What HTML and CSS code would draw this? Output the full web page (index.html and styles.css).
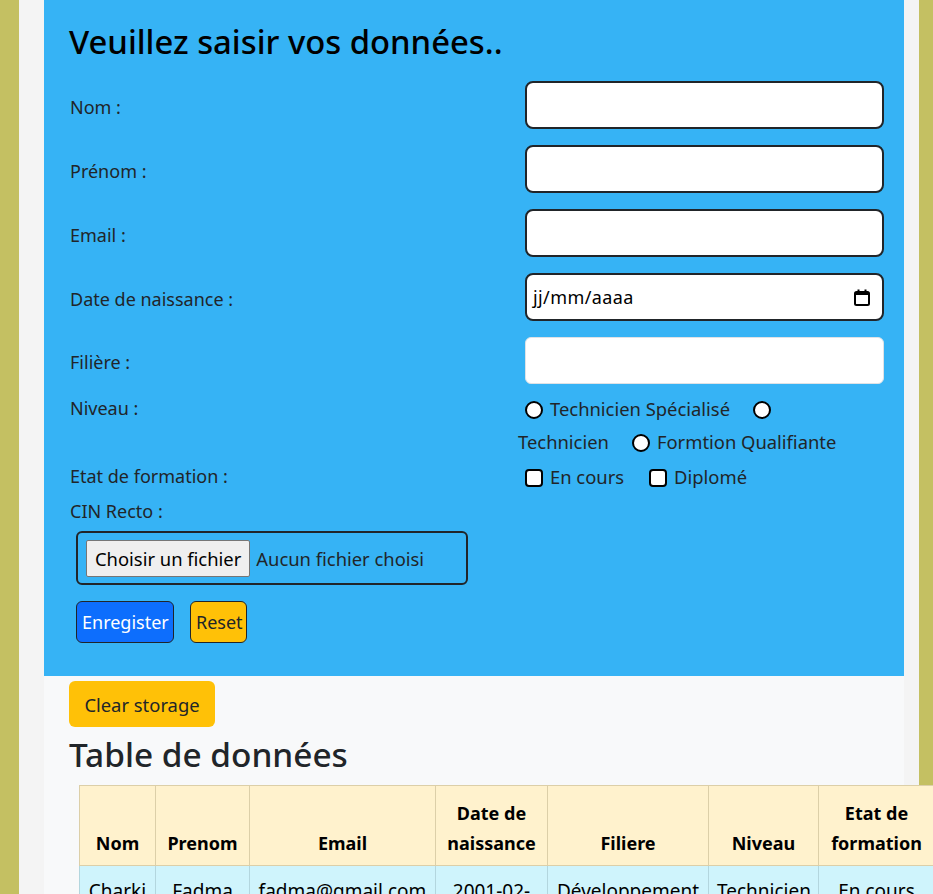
FILE: index.html
```html
<!DOCTYPE html>
<html lang="fr">
<head>
<meta charset="utf-8">
<title>Formulaire</title>
<link rel="stylesheet" href="styles.css">
</head>
<body>
<div class="page">
  <section class="panel">
    <h2 class="title">Veuillez saisir vos données..</h2>
    <form class="form">
      <div class="row">
        <label class="lbl">Nom :</label>
        <div class="field"><div class="input"></div></div>
      </div>
      <div class="row">
        <label class="lbl">Prénom :</label>
        <div class="field"><div class="input"></div></div>
      </div>
      <div class="row">
        <label class="lbl">Email :</label>
        <div class="field"><div class="input"></div></div>
      </div>
      <div class="row">
        <label class="lbl">Date de naissance :</label>
        <div class="field">
          <div class="input date">
            <span class="date-text">jj/mm/aaaa</span>
            <svg class="cal" width="16" height="17" viewBox="0 0 16 17"><rect x="1" y="3" width="14" height="13" rx="1.5" fill="none" stroke="#000" stroke-width="2"/><rect x="1" y="3" width="14" height="3" fill="#000"/><rect x="3.5" y="0.5" width="2" height="3" fill="#000"/><rect x="10.5" y="0.5" width="2" height="3" fill="#000"/></svg>
          </div>
        </div>
      </div>
      <div class="row">
        <label class="lbl">Filière :</label>
        <div class="field"><div class="input light"></div></div>
      </div>
      <div class="row choice niveau">
        <label class="lbl">Niveau :</label>
        <div class="opts">
          <span class="radio first"></span><span class="opt-text">Technicien Spécialisé</span><span class="radio"></span><br><span class="opt-text">Technicien</span><span class="radio"></span><span class="opt-text">Formtion Qualifiante</span>
        </div>
      </div>
      <div class="row choice etat">
        <label class="lbl">Etat de formation :</label>
        <div class="opts">
          <span class="check first"></span><span class="opt-text">En cours</span><span class="check"></span><span class="opt-text">Diplomé</span>
        </div>
      </div>
      <div class="cin">
        <label class="lbl">CIN Recto :</label>
      </div>
      <div class="filebox">
        <span class="filebtn">Choisir un fichier</span>
        <span class="filename">Aucun fichier choisi</span>
      </div>
      <div class="actions">
        <button type="button" class="btn btn-save">Enregister</button>
        <button type="button" class="btn btn-reset">Reset</button>
      </div>
    </form>
  </section>
  <section class="data">
    <button type="button" class="btn-clear">Clear storage</button>
    <h1 class="table-title">Table de données</h1>
    <table class="tbl">
      <colgroup>
        <col style="width:76px"><col style="width:94px"><col style="width:186px"><col style="width:112px"><col style="width:161px"><col style="width:110px"><col style="width:116px"><col style="width:110px"><col style="width:110px">
      </colgroup>
      <thead>
        <tr>
          <th>Nom</th><th>Prenom</th><th>Email</th><th>Date de naissance</th><th>Filiere</th><th>Niveau</th><th>Etat de formation</th><th>CIN Recto</th><th>Actions</th>
        </tr>
      </thead>
      <tbody>
        <tr>
          <td>Charki</td><td>Fadma</td><td>fadma@gmail.com</td><td>2001-02-14</td><td>Développement Digital</td><td>Technicien</td><td>En cours</td><td>cin.jpg</td><td>Supprimer</td>
        </tr>
      </tbody>
    </table>
  </section>
</div>
</body>
</html>
```
FILE: styles.css
```css
html, body {
  margin: 0;
  padding: 0;
}
body {
  background: #c4c062;
  font-family: "Noto Sans", "Open Sans", sans-serif;
  color: #212529;
  overflow: hidden;
  height: 894px;
}
.page {
  width: 860px;
  margin-left: 19px;
  background: #f4f4f4;
  padding: 0 15px 0 25px;
  min-height: 894px;
}
.panel {
  background: #36b3f5;
  padding: 23px 21px 33px 25px;
}
.title {
  margin: 0 0 20px 0;
  font-size: 32.8px;
  line-height: 38px;
  font-weight: 500;
  color: #000;
}
.form {
  display: flex;
  flex-direction: column;
}
.row {
  display: grid;
  grid-template-columns: 449px 366px;
  align-items: center;
  margin-bottom: 16px;
}
.row > .lbl {
  padding-top: 3px;
}
.lbl {
  font-size: 18px;
  color: #212529;
  padding-left: 1px;
}
.field {
  padding-left: 7px;
}
.input {
  box-sizing: border-box;
  height: 48px;
  background: #fff;
  border: 2px solid #212529;
  border-radius: 8px;
}
.input.light {
  border: 1px solid #dee2e6;
  height: 47px;
  border-radius: 6px;
}
.date {
  display: flex;
  align-items: center;
  justify-content: space-between;
  padding: 0 12px 0 6px;
}
.date-text {
  font-size: 18px;
  color: #000;
  letter-spacing: 0.4px;
}
.cal {
  display: block;
}
.choice {
  align-items: start;
  margin-bottom: 0;
}
.niveau {
  margin-top: -8px;
}
.etat {
  margin-top: 2px;
}
.row.choice > .lbl {
  line-height: 33px;
  padding-top: 0;
}
.opts {
  font-size: 18.4px;
  line-height: 33px;
  color: #212529;
}
.radio, .check {
  display: inline-block;
  box-sizing: border-box;
  width: 18px;
  height: 18px;
  background: #fff;
  border: 2px solid #000;
  vertical-align: -3px;
  margin: 0 7px 0 23px;
}
.radio {
  border-radius: 50%;
}
.check {
  border-radius: 4px;
  margin-left: 25px;
}
.radio.first, .check.first {
  margin-left: 7px;
}
.opt-text + .radio {
  margin-left: 23px;
}
.niveau .opts br + .opt-text + .radio {
  margin-left: 23px;
}
.cin {
  height: 33px;
  line-height: 33px;
  margin-top: 2px;
}
.cin .lbl {
  line-height: 33px;
}
.filebox {
  box-sizing: border-box;
  width: 392px;
  height: 54px;
  margin: 3px 0 0 7px;
  border: 2px solid #212529;
  border-radius: 6px;
  display: flex;
  align-items: center;
  padding-left: 8px;
}
.filebtn {
  box-sizing: border-box;
  height: 37px;
  padding: 0 8px;
  display: flex;
  align-items: center;
  background: #efefef;
  border: 1px solid #767676;
  border-radius: 2px;
  font-size: 18.4px;
  color: #000;
}
.filename {
  margin-left: 6px;
  font-size: 18.4px;
  color: #212529;
}
.actions {
  display: flex;
  gap: 16px;
  margin: 16px 0 0 7px;
}
.btn {
  box-sizing: border-box;
  height: 42px;
  border: 1px solid #212529;
  border-radius: 6px;
  font-family: inherit;
  font-size: 18px;
  padding: 0 5px;
  cursor: pointer;
}
.btn-save {
  background: #0d6efd;
  color: #fff;
  width: 98px;
}
.btn-reset {
  background: #ffc107;
  color: #212529;
  width: 57px;
}
.data {
  background: #f8f9fa;
  padding: 5px 0 20px 25px;
  min-height: 300px;
}
.btn-clear {
  display: block;
  height: 46px;
  width: 146px;
  border: 0;
  border-radius: 6px;
  background: #ffc107;
  color: #212529;
  font-family: inherit;
  font-size: 18.4px;
  padding: 0;
}
.table-title {
  margin: 6px 0 9px 0;
  font-size: 33.4px;
  line-height: 43px;
  font-weight: 500;
  color: #212529;
}
.tbl {
  margin-left: 10px;
  border-collapse: collapse;
  table-layout: fixed;
  width: 1075px;
}
.tbl th, .tbl td {
  text-align: center;
  padding: 12px 8px 7px;
  line-height: 30px;
  font-size: 18px;
}
.tbl th {
  background: #fff2cd;
  border: 1px solid #dccfa8;
  font-weight: 700;
  color: #000;
  vertical-align: bottom;
}
.tbl td {
  background: #cff4fc;
  border: 1px solid #b3d6de;
  color: #000;
  vertical-align: top;
  padding-top: 10px;
  font-size: 19px;
}
```
